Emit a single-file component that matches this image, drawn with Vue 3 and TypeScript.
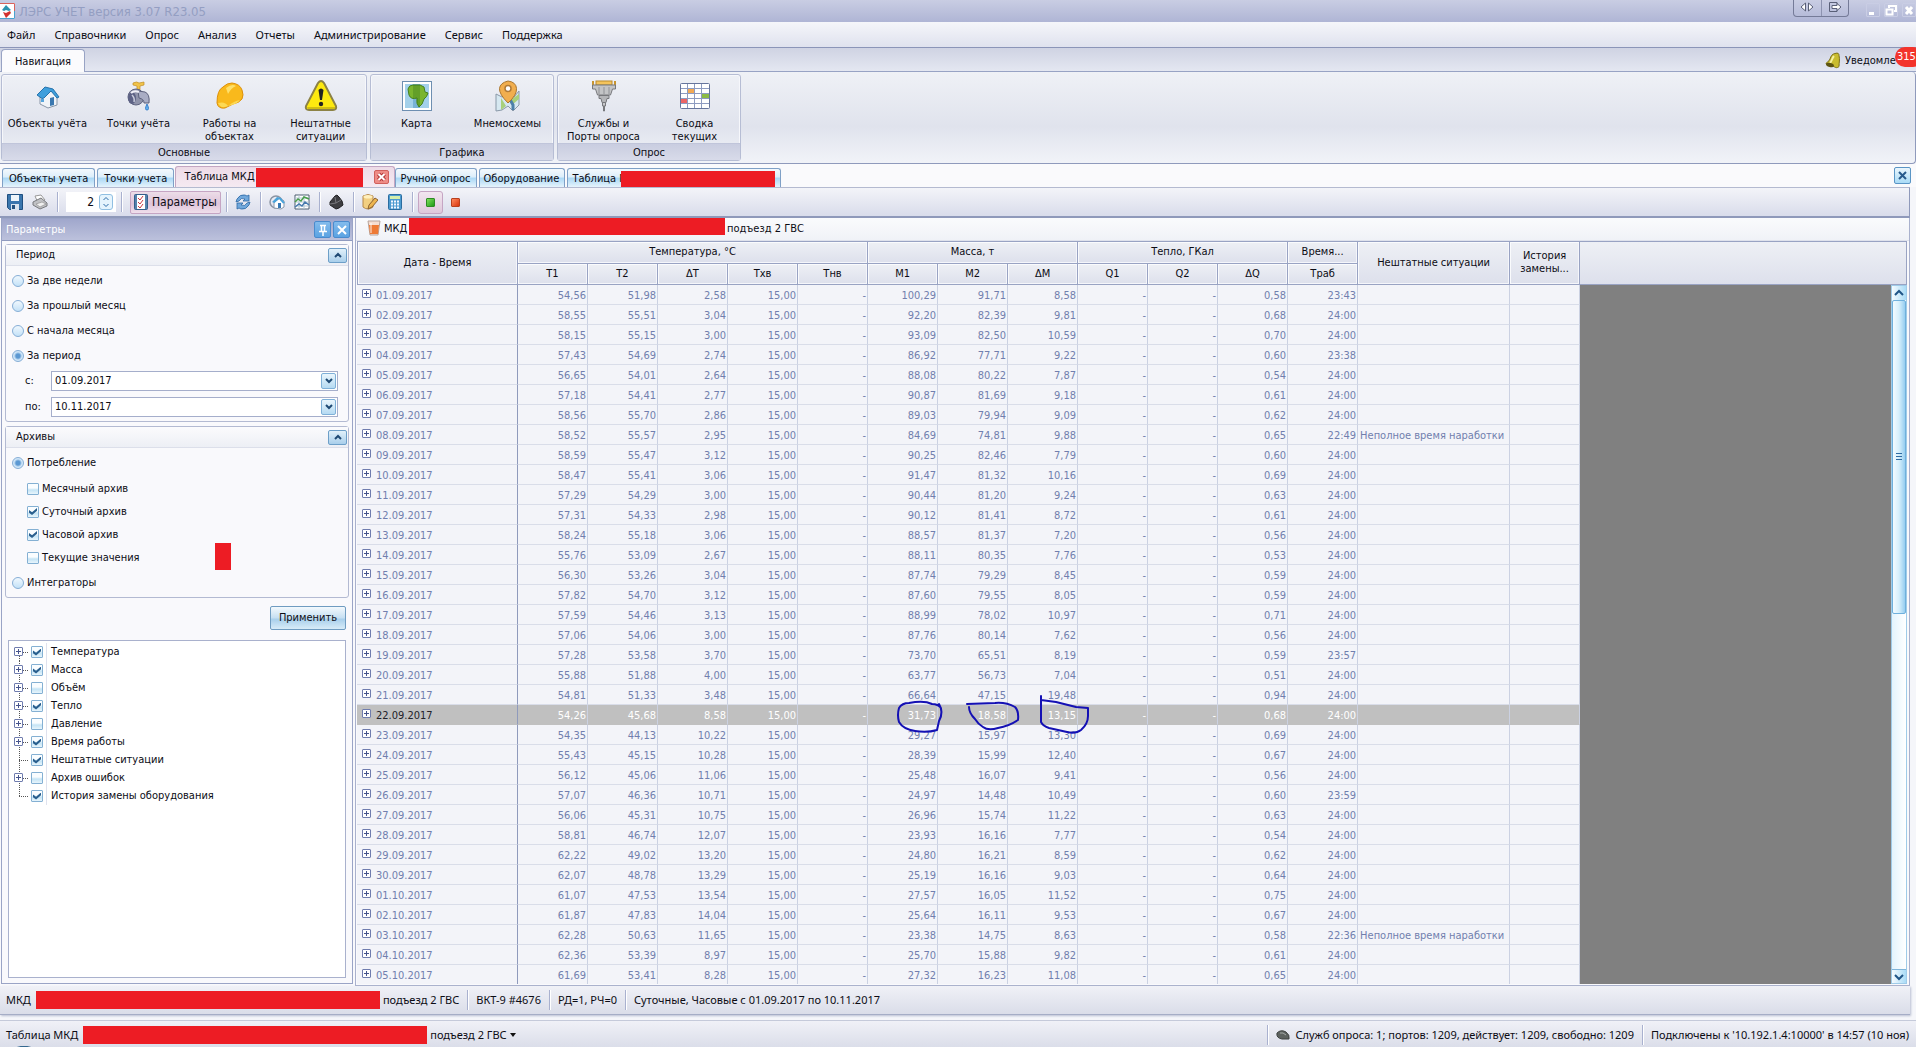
<script setup lang="ts">
import { ref } from 'vue'

interface ArchiveRow {
  date: string
  cells: string[]
  note: string
}

const menu = ['Файл', 'Справочники', 'Опрос', 'Анализ', 'Отчеты', 'Администрирование', 'Сервис', 'Поддержка']

const groups = [
  {
    title: 'Основные',
    items: [
      { icon: 'house', lines: ['Объекты учёта'] },
      { icon: 'tap', lines: ['Точки учёта'] },
      { icon: 'helmet', lines: ['Работы на', 'объектах'] },
      { icon: 'warning', lines: ['Нештатные', 'ситуации'] },
    ],
  },
  {
    title: 'Графика',
    items: [
      { icon: 'map', lines: ['Карта'] },
      { icon: 'pin', lines: ['Мнемосхемы'] },
    ],
  },
  {
    title: 'Опрос',
    items: [
      { icon: 'plug', lines: ['Службы и', 'Порты опроса'] },
      { icon: 'grid', lines: ['Сводка', 'текущих'] },
    ],
  },
]

const periods = ['За две недели', 'За прошлый месяц', 'С начала месяца', 'За период']
const period = ref('За период')
const dateFrom = ref('01.09.2017')
const dateTo = ref('10.11.2017')
const count = ref('2')
const source = ref('Потребление')

const archives = ref([
  { name: 'Месячный архив', on: false },
  { name: 'Суточный архив', on: true },
  { name: 'Часовой архив', on: true },
  { name: 'Текущие значения', on: false },
])

const tree = ref([
  { name: 'Температура', on: true, leaf: false },
  { name: 'Масса', on: true, leaf: false },
  { name: 'Объём', on: false, leaf: false },
  { name: 'Тепло', on: true, leaf: false },
  { name: 'Давление', on: false, leaf: false },
  { name: 'Время работы', on: true, leaf: false },
  { name: 'Нештатные ситуации', on: true, leaf: true },
  { name: 'Архив ошибок', on: false, leaf: false },
  { name: 'История замены оборудования', on: true, leaf: true },
])

// T1 T2 ΔT M1 M2 ΔM ΔQ Траб
const source35 = `54,56 51,98 2,58 100,29 91,71 8,58 0,58 23:43
58,55 55,51 3,04 92,20 82,39 9,81 0,68 24:00
58,15 55,15 3,00 93,09 82,50 10,59 0,70 24:00
57,43 54,69 2,74 86,92 77,71 9,22 0,60 23:38
56,65 54,01 2,64 88,08 80,22 7,87 0,54 24:00
57,18 54,41 2,77 90,87 81,69 9,18 0,61 24:00
58,56 55,70 2,86 89,03 79,94 9,09 0,62 24:00
58,52 55,57 2,95 84,69 74,81 9,88 0,65 22:49
58,59 55,47 3,12 90,25 82,46 7,79 0,60 24:00
58,47 55,41 3,06 91,47 81,32 10,16 0,69 24:00
57,29 54,29 3,00 90,44 81,20 9,24 0,63 24:00
57,31 54,33 2,98 90,12 81,41 8,72 0,61 24:00
58,24 55,18 3,06 88,57 81,37 7,20 0,56 24:00
55,76 53,09 2,67 88,11 80,35 7,76 0,53 24:00
56,30 53,26 3,04 87,74 79,29 8,45 0,59 24:00
57,82 54,70 3,12 87,60 79,55 8,05 0,59 24:00
57,59 54,46 3,13 88,99 78,02 10,97 0,71 24:00
57,06 54,06 3,00 87,76 80,14 7,62 0,56 24:00
57,28 53,58 3,70 73,70 65,51 8,19 0,59 23:57
55,88 51,88 4,00 63,77 56,73 7,04 0,51 24:00
54,81 51,33 3,48 66,64 47,15 19,48 0,94 24:00
54,26 45,68 8,58 31,73 18,58 13,15 0,68 24:00
54,35 44,13 10,22 29,27 15,97 13,30 0,69 24:00
55,43 45,15 10,28 28,39 15,99 12,40 0,67 24:00
56,12 45,06 11,06 25,48 16,07 9,41 0,56 24:00
57,07 46,36 10,71 24,97 14,48 10,49 0,60 23:59
56,06 45,31 10,75 26,96 15,74 11,22 0,63 24:00
58,81 46,74 12,07 23,93 16,16 7,77 0,54 24:00
62,22 49,02 13,20 24,80 16,21 8,59 0,62 24:00
62,07 48,78 13,29 25,19 16,16 9,03 0,64 24:00
61,07 47,53 13,54 27,57 16,05 11,52 0,75 24:00
61,87 47,83 14,04 25,64 16,11 9,53 0,67 24:00
62,28 50,63 11,65 23,38 14,75 8,63 0,58 22:36
62,36 53,39 8,97 25,70 15,88 9,82 0,61 24:00
61,69 53,41 8,28 27,32 16,23 11,08 0,65 24:00`

const rows: ArchiveRow[] = source35.split('\n').map((line, i) => {
  const v = line.split(' ')
  const day = i < 30 ? i + 1 : i - 29
  const month = i < 30 ? '09' : '10'
  return {
    date: `${String(day).padStart(2, '0')}.${month}.2017`,
    cells: [v[0], v[1], v[2], '15,00', '-', v[3], v[4], v[5], '-', '-', v[6], v[7]],
    note: i === 7 || i === 32 ? 'Неполное время наработки' : '',
  }
})

const selected = ref('22.09.2017')
const subHeads = ['Т1', 'Т2', 'ΔТ', 'Тхв', 'Тнв', 'М1', 'М2', 'ΔМ', 'Q1', 'Q2', 'ΔQ', 'Траб']
</script>

<template>
  <div class="app">
    <header class="title">
      <svg class="logo" width="16" height="16" viewBox="0 0 16 16">
        <rect x="0" y="0" width="15" height="16" fill="#fff" />
        <path d="M0 .5h14.5V8" fill="none" stroke="#d8635c" />
        <path d="M14.5 8v7.5H0" fill="none" stroke="#4aa3d0" />
        <path d="M2 7l4-5 5 5-2 1-3-1-2 1z" fill="#2d93b0" />
        <path d="M3 9l3 1 4-2 1 2-5 5z" fill="#d2322f" />
      </svg>
      <h1>ЛЭРС УЧЕТ версия 3.07 R23.05</h1>
      <div class="quick">
        <button type="button" aria-label="Переключить">
          <svg width="14" height="10" viewBox="0 0 14 10" fill="#fff" stroke="#5a6078"><path d="M5.500 1v8L1 5zM8.500 1v8L13 5z" /></svg>
        </button>
        <button type="button" aria-label="Выход">
          <svg width="14" height="12" viewBox="0 0 14 12" fill="none" stroke="#5a6078"><path d="M9 3.500V1.500H1.500v9H9V8.500" /><path d="M4 4.500h5V2.500L13 6 9 9.500v-2H4z" fill="#fff" /></svg>
        </button>
      </div>
      <div class="winbtns">
        <button type="button" aria-label="Свернуть"><svg width="12" height="12"><rect x="2" y="8" width="5" height="3" fill="#fff" /></svg></button>
        <button type="button" aria-label="Восстановить"><svg width="12" height="12" fill="none" stroke="#fff" stroke-width="2"><path d="M4 4V2h7v5H9M1.500 5.500h6v5h-6z" /></svg></button>
        <button type="button" aria-label="Закрыть"><svg width="12" height="12" stroke="#fff" stroke-width="3"><path d="M3 3l6 7M9 3l-6 7" /></svg></button>
      </div>
    </header>

    <nav class="menu">
      <button v-for="m in menu" :key="m" type="button">{{ m }}</button>
    </nav>

    <div class="strip">
      <button class="navtab" type="button">Навигация</button>
      <div class="notify">
        <svg width="16" height="18" viewBox="0 0 16 18">
          <path d="M10 1.500c3-1 4 0 4 2 1 4 0 7 0 11-2 2-4 1-5 0L1 12c0-2 3-2 4-5s2-5 5-5.500z" fill="#c9bc2e" stroke="#7c7018" />
          <path d="M9 4c-2 2-2 5-4 7" stroke="#f6f1a0" stroke-width="2" fill="none" />
          <ellipse cx="5" cy="13" rx="4" ry="2" fill="#5d5412" transform="rotate(15 5 13)" />
        </svg>
        <span>Уведомле</span>
        <b class="badge">315</b>
      </div>
    </div>

    <section class="ribbon">
      <div v-for="g in groups" :key="g.title" class="rgroup">
        <div class="ritems">
          <button v-for="it in g.items" :key="it.icon" type="button" class="ritem">
            <svg v-if="it.icon === 'house'" width="32" height="32" viewBox="0 0 32 32">
              <path d="M8 16v8l8 4 9-3v-9l-5-6z" fill="#f1f4f8" stroke="#8a97a8" />
              <path d="M5 15l8-8 8 2 6 8-2 1-6-7-7 7-2 .5z" fill="#3f9fdc" stroke="#2572ac" />
              <path d="M9 19h3v3H9z" fill="#56a5dd" /><path d="M18 18l4-1v8l-4 1z" fill="#3b78b0" />
            </svg>
            <svg v-else-if="it.icon === 'tap'" width="32" height="32" viewBox="0 0 32 32">
              <path d="M10 3q4-2 6 0l5-1v3l-4 1v4h-3V6l-4-1z" fill="#f0c34a" stroke="#c28e24" stroke-width=".7" />
              <circle cx="13" cy="17" r="8" fill="#8f93aa" stroke="#5e6380" />
              <path d="M15 11l7 1q5 2 4 11h-5q0-4-5-5z" fill="#a9adc4" stroke="#5c617c" />
              <ellipse cx="9" cy="18" rx="4" ry="6" fill="#5d6285" /><path d="M8 13q3-3 8-1" stroke="#f0f0f8" stroke-width="2" fill="none" />
              <path d="M9 15q3 3 2 7" stroke="#c9ccdc" stroke-width="1.500" fill="none" />
              <path d="M24 24q-3 6 0 6t0-6" fill="#63b1ee" stroke="#3a7fcb" />
            </svg>
            <svg v-else-if="it.icon === 'helmet'" width="32" height="32" viewBox="0 0 32 32">
              <path d="M3 23Q3 10 9 7q4-4 9-4 8 1 10 7 2 5 0 9-3 4-9 5l-8 4q-7 1-8-5z" fill="#f9b91c" stroke="#dd9009" />
              <path d="M4 23q7-2 10 3 6-5 12-6-3 4-8 5l-7 2q-5 1-7-4z" fill="#fcd955" />
              <path d="M12 8q6-5 10-2-5 2-8 8" fill="#fee06b" />
            </svg>
            <svg v-else-if="it.icon === 'warning'" width="34" height="32" viewBox="0 0 34 32">
              <path d="M14 3q3-4 6 0l12 23q1 4-3 4H5q-4 0-3-4z" fill="#fde910" stroke="#8c8245" stroke-width="2" />
              <path d="M3 27h28v2H4z" fill="#b5a312" opacity=".6" />
              <path d="M14.500 10q2.500-3 5 0l-1.500 10h-2z" fill="#222" /><circle cx="17" cy="24" r="2.200" fill="#222" />
            </svg>
            <svg v-else-if="it.icon === 'map'" width="32" height="32" viewBox="0 0 32 32">
              <rect x="1.500" y="1.500" width="29" height="29" fill="#fff" stroke="#6e8fb1" />
              <rect x="4" y="4" width="24" height="24" fill="#a3d0ea" /><path d="M12 4h7v24h-7z" fill="#5b9fc9" opacity=".6" />
              <path d="M7 9q1-4 5-4l7 0 4 2 1 5 3 1q-1 4-4 6l-2 5-3 3q-3-3-2-9-6 2-8-3z" fill="#7ab52e" stroke="#45811f" />
              <path d="M12 5h7v22q-4-3-3-9h-4z" fill="#2f6d1c" opacity=".3" />
            </svg>
            <svg v-else-if="it.icon === 'pin'" width="32" height="32" viewBox="0 0 32 32">
              <path d="M4 14l6 3 6-3 6 3 5-6v14l-6 6-5-5-6 4-6 1z" fill="#d6e8f1" stroke="#8998a8" />
              <path d="M9 18l5 8-5 4zM20 19l7-5v5l-7 6z" fill="#a8d07c" /><path d="M16 16l5 9v5" stroke="#4c80a9" stroke-width="3" fill="none" />
              <path d="M16 23Q7 14 7.500 8.500T16 1q8 1 8.500 7.500T16 23z" fill="#f1ae4e" stroke="#aa762e" /><circle cx="16" cy="8.500" r="3" fill="#fff" stroke="#b07b38" stroke-width="1.500" />
            </svg>
            <svg v-else-if="it.icon === 'plug'" width="32" height="32" viewBox="0 0 32 32">
              <path d="M5 1v5M27 1v5" stroke="#c9952f" stroke-width="2" />
              <rect x="8" y="1" width="16" height="4" fill="#f4c45c" stroke="#b98a2c" />
              <path d="M4.500 5h23v4h-3l-2 6h-13l-2-6h-3z" fill="#c3c4c6" stroke="#77787c" />
              <path d="M11 7v7M16 7v7M21 7v7" stroke="#909296" /><path d="M11 15.500h10v3h-2l-1 4h-4l-1-4h-2z" fill="#b4b5b8" stroke="#77787c" />
              <path d="M14.500 22.500h3V26h-3zM15.500 26v5h1v-5" fill="#c7c8cb" stroke="#77787c" />
            </svg>
            <svg v-else width="32" height="32" viewBox="0 0 32 32">
              <rect x="1.500" y="3.500" width="29" height="25" rx="1" fill="#fff" stroke="#66759c" />
              <path d="M9 9h7v5H9z" fill="#f3a954" /><path d="M23 14h7v5h-7z" fill="#8cbb45" /><path d="M2 19h7v5H2z" fill="#ec6565" />
              <path d="M8.500 4v24M15.500 4v24M22.500 4v24M2 8.500h28M2 13.500h28M2 18.500h28M2 23.500h28" stroke="#8d9bc0" fill="none" />
            </svg>
            <span v-for="l in it.lines" :key="l">{{ l }}</span>
          </button>
        </div>
        <div class="rtitle">{{ g.title }}</div>
      </div>
    </section>

    <div class="doctabs">
      <button type="button" class="dtab">Объекты учета</button>
      <button type="button" class="dtab">Точки учета</button>
      <div class="dtab active">
        <span>Таблица МКД</span><i class="mask m-active"></i>
        <button type="button" class="tabclose" aria-label="Закрыть вкладку"><svg width="13" height="12" viewBox="0 0 13 12"><path d="M3.500 3l6 6M9.500 3l-6 6" stroke="#b13535" stroke-width="4" /><path d="M3.500 3l6 6M9.500 3l-6 6" stroke="#fff" stroke-width="2" /></svg></button>
      </div>
      <button type="button" class="dtab tight">Ручной опрос</button>
      <button type="button" class="dtab tight">Оборудование</button>
      <button type="button" class="dtab tight"><span>Таблица М</span><i class="mask m-last"></i></button>
      <button type="button" class="closeall" aria-label="Закрыть"><svg width="12" height="12" stroke="#285a8c" stroke-width="2"><path d="M2 2l7 7M9 2L2 9" /></svg></button>
    </div>

    <div class="toolbar">
      <button type="button" class="tool" aria-label="Сохранить"><svg width="16" height="16" viewBox="0 0 16 16"><path d="M.500.500h15v15h-13l-2-2z" fill="#3a76ad" stroke="#1f4f80" /><path d="M4 1h8v6H4z" fill="#eef4fa" /><path d="M4 10h8v6H4z" fill="#d9e4ee" /><path d="M5 11h3v4H5z" fill="#24527f" /></svg></button>
      <button type="button" class="tool" aria-label="Печать"><svg width="16" height="16" viewBox="0 0 16 16"><path d="M3 2l6-1 4 5-7 3z" fill="#fff" stroke="#999" /><path d="M1 8l8-4 6 5v3l-7 3-7-4z" fill="#c0c1c4" stroke="#77797d" /><path d="M4 10l6-2 4 2-6 3z" fill="#efefef" stroke="#888" stroke-width=".6" /></svg></button>
      <i class="sep"></i>
      <div class="spin">
        <input v-model="count" type="text" aria-label="Количество" />
        <button type="button" aria-label="Изменить"><svg width="10" height="14" fill="none" stroke="#2b6ba8"><path d="M2.500 5L5 2.500 7.500 5M2.500 9L5 11.500 7.500 9" /></svg></button>
      </div>
      <i class="sep"></i>
      <button type="button" class="params">
        <svg width="14" height="16" viewBox="0 0 14 16"><rect x=".5" y=".5" width="13" height="15" rx="1" fill="#5582ac" stroke="#345f8b" /><path d="M3 1h8v14H3z" fill="#fff" /><path d="M4 4l2 2 3-4M4 8l2 2 3-4M4 12l2 2 3-4" stroke="#cb3a42" fill="none" /></svg>
        Параметры
      </button>
      <i class="sep"></i>
      <button type="button" class="tool" aria-label="Обновить"><svg width="16" height="16" viewBox="0 0 16 16" fill="#70a8dc" stroke="#2b67a4" stroke-width=".8"><path d="M2 5q3-5 8-4l2 1 2-1v6H8l2-2Q6 3 4 7L1 8z" /><path d="M14 11q-3 5-8 4l-2-1-2 1V9h6l-2 2q4 2 6-2l3-1z" /></svg></button>
      <i class="sep"></i>
      <button type="button" class="tool" aria-label="Объект"><svg width="16" height="16" viewBox="0 0 16 16"><circle cx="7" cy="8" r="6" fill="none" stroke="#8a94a3" stroke-width="1.500" /><path d="M5 8v6l7 1 3-2V7l-4-3z" fill="#fff" stroke="#8796a8" /><path d="M3 8l5-5 4 1 4 5-2 .5L10 5 5.500 9z" fill="#4aa3da" /><path d="M9 9h3v5H9z" fill="#3679b5" /></svg></button>
      <button type="button" class="tool" aria-label="График"><svg width="16" height="16" viewBox="0 0 16 16"><path d="M1 1h14v14H1z" fill="#fff" stroke="#4d5f70" /><path d="M1 4h14M1 8h14M1 12h14M5 1v14M10 1v14" stroke="#b3c6d2" /><path d="M1 8l3-3 3 2 3-4 5 2" stroke="#4a9e4c" fill="none" stroke-width="1.500" /><path d="M1 13l4-3 3 2 3-4 4 3" stroke="#477aae" fill="none" stroke-width="1.500" /></svg></button>
      <i class="sep"></i>
      <button type="button" class="tool" aria-label="Метка"><svg width="16" height="16" viewBox="0 0 16 16"><path d="M2 8l5-6 2-1 2 2 3 4 1 4-4 3-3 1-6-4z" fill="#3d3d41" stroke="#202022" /><path d="M7 3l1 6-6 1M8 9l5-3" stroke="#77777c" fill="none" /></svg></button>
      <i class="sep"></i>
      <button type="button" class="tool" aria-label="Правка"><svg width="16" height="16" viewBox="0 0 16 16"><path d="M1 2q5-3 10 0v11q-5 4-10 0z" fill="#f2cf81" stroke="#b5884b" /><ellipse cx="6" cy="2.800" rx="4.500" ry="1.800" fill="#fff0bd" /><path d="M6 15l1-4 6-7 3 2-6 7z" fill="#eeb64f" stroke="#8c6330" /></svg></button>
      <button type="button" class="tool" aria-label="Калькулятор"><svg width="16" height="16" viewBox="0 0 16 16"><rect x="1.500" y=".5" width="13" height="15" rx="1" fill="#4c9bd0" stroke="#2b6c9f" /><path d="M3 2h10v3H3z" fill="#d4efad" /><path d="M4 7.500h8M4 10.500h8M4 13.500h8" stroke="#f3f8ff" stroke-width="1.800" stroke-dasharray="2 1" /></svg></button>
      <i class="sep"></i>
      <button type="button" class="state on" aria-label="Включено"><i class="lamp green"></i></button>
      <button type="button" class="state" aria-label="Выключено"><i class="lamp red"></i></button>
    </div>

    <main class="work">
      <aside class="pane">
        <div class="phead">
          <span>Параметры</span>
          <button type="button" aria-label="Закрепить"><svg width="12" height="12" fill="none" stroke="#fff"><path d="M3 1.500h6M4.500 2v5M7.500 2v5M2 7.500h8M6 8v4" stroke-width="1.500" /></svg></button>
          <button type="button" aria-label="Закрыть панель"><svg width="12" height="12" stroke="#fff" stroke-width="2"><path d="M2 2l8 8M10 2l-8 8" /></svg></button>
        </div>
        <div class="pbody">
          <section class="box">
            <div class="bhead"><span>Период</span><button type="button" aria-label="Свернуть период"><svg width="8" height="6" fill="none" stroke="#1f4a74" stroke-width="2"><path d="M1 5l3-3 3 3" /></svg></button></div>
            <label v-for="p in periods" :key="p" class="opt"><input v-model="period" type="radio" name="period" :value="p" />{{ p }}</label>
            <div class="dates">
              <label for="from">с:</label>
              <div class="date"><input id="from" v-model="dateFrom" type="text" /><button type="button" aria-label="Выбрать начало"><svg width="8" height="6" fill="none" stroke="#1f4a74" stroke-width="2"><path d="M1 1l3 3 3-3" /></svg></button></div>
              <label for="to">по:</label>
              <div class="date"><input id="to" v-model="dateTo" type="text" /><button type="button" aria-label="Выбрать конец"><svg width="8" height="6" fill="none" stroke="#1f4a74" stroke-width="2"><path d="M1 1l3 3 3-3" /></svg></button></div>
            </div>
          </section>
          <section class="box second">
            <div class="bhead"><span>Архивы</span><button type="button" aria-label="Свернуть архивы"><svg width="8" height="6" fill="none" stroke="#1f4a74" stroke-width="2"><path d="M1 5l3-3 3 3" /></svg></button></div>
            <label class="opt"><input v-model="source" type="radio" name="source" value="Потребление" />Потребление</label>
            <div class="checks">
              <label v-for="a in archives" :key="a.name"><input v-model="a.on" type="checkbox" />{{ a.name }}</label>
              <i class="mask spot"></i>
            </div>
            <label class="opt"><input v-model="source" type="radio" name="source" value="Интеграторы" />Интеграторы</label>
          </section>
          <button type="button" class="apply">Применить</button>
          <ul class="tree">
            <li v-for="t in tree" :key="t.name" :class="{ leaf: t.leaf }">
              <i class="branch"><i v-if="!t.leaf" class="plus"></i></i>
              <label><input v-model="t.on" type="checkbox" /><span>{{ t.name }}</span></label>
            </li>
          </ul>
        </div>
      </aside>

      <section class="view">
        <div class="info">
          <svg width="14" height="16" viewBox="0 0 14 16"><path d="M1 1h12l-2 14H3z" fill="#f6ded2" stroke="#b7a49c" /><path d="M2 5h10l-1 9H3z" fill="#ee7a35" /><path d="M4 3v10" stroke="#fff" stroke-width="1.500" opacity=".6" /></svg>
          <span>МКД</span><i class="mask m-info"></i><span>подъезд 2 ГВС</span>
        </div>
        <div class="data">
          <div class="tablebox">
            <table>
              <colgroup>
                <col class="c-date" /><col v-for="s in subHeads" :key="s" class="c-num" /><col class="c-note" /><col class="c-num" />
              </colgroup>
              <thead>
                <tr>
                  <th rowspan="2" class="first">Дата - Время</th>
                  <th colspan="5">Температура, °C</th>
                  <th colspan="3">Масса, т</th>
                  <th colspan="3">Тепло, ГКал</th>
                  <th>Время...</th>
                  <th rowspan="2">Нештатные ситуации</th>
                  <th rowspan="2">История замены...</th>
                </tr>
                <tr><th v-for="s in subHeads" :key="s">{{ s }}</th></tr>
              </thead>
              <tbody>
                <tr v-for="r in rows" :key="r.date" :class="{ sel: r.date === selected }" @click="selected = r.date">
                  <td class="first"><i class="plus"></i>{{ r.date }}</td>
                  <td v-for="(c, i) in r.cells" :key="i">{{ c }}</td>
                  <td class="note">{{ r.note }}</td>
                  <td></td>
                </tr>
              </tbody>
            </table>
            <svg class="ink" width="205" height="50" viewBox="890 690 205 50" fill="none" stroke="#1410b4" stroke-width="2" stroke-linejoin="round" stroke-linecap="round">
              <path d="M939 704q5 8 0 17l-2 9q-10 3-22 1-12-2-16-9-2-7 0-14 3-5 10-5 15-3 23 1 6 0 9 4" />
              <path d="M967 704l28-1q11-1 20 4 4 4 3 13-9 6-20 8-10 3-15-1-5-3-8-8-6-6-6-12" />
              <path d="M1041 696v26q2 4 8 6l18 4q9 2 14-2 7-6 7-14v-8l-12-1-20-5-15-2" />
            </svg>
          </div>
          <div class="rest">
            <div class="hfill"></div>
            <div class="gray">
              <div class="scroll">
                <button type="button" aria-label="Вверх"><svg width="10" height="8" fill="none" stroke="#1f5587" stroke-width="2"><path d="M1 6l4-4 4 4" /></svg></button>
                <div class="thumb"><i></i></div>
                <button type="button" class="down" aria-label="Вниз"><svg width="10" height="8" fill="none" stroke="#1f5587" stroke-width="2"><path d="M1 2l4 4 4-4" /></svg></button>
              </div>
            </div>
          </div>
        </div>
      </section>
    </main>

    <footer class="status">
      <span>МКД</span><i class="mask m-foot"></i><span>подъезд 2 ГВС</span><i class="sep"></i><span>ВКТ-9 #4676</span><i class="sep"></i><span>РД=1, РЧ=0</span><i class="sep"></i><span>Суточные, Часовые с 01.09.2017 по 10.11.2017</span>
    </footer>
    <footer class="status bottom">
      <span>Таблица МКД</span><i class="mask m-foot"></i><span>подъезд 2 ГВС</span><i class="caret"></i>
      <div class="right">
        <i class="sep"></i>
        <svg width="14" height="10" viewBox="0 0 14 10"><path d="M1 3q4-4 9-1 4 3 3 7H6Q0 8 1 3z" fill="#5d625f" stroke="#3e4240" /><path d="M4 3q3-1 6 2" stroke="#a5aaa7" fill="none" /></svg>
        <span>Служб опроса: 1; портов: 1209, действует: 1209, свободно: 1209</span>
        <i class="sep"></i>
        <span>Подключены к '10.192.1.4:10000' в 14:57 (10 ноя)</span>
      </div>
      <svg class="orb" width="20" height="2" viewBox="0 0 20 2"><path d="M1 2.500Q10-1.500 19 2.500" fill="none" stroke="#35688f" stroke-width="1.500" /></svg>
    </footer>
  </div>
</template>

<style>
body {
  margin: 0;
  background: #f5f6fa;
}
</style>

<style scoped>
* {
  box-sizing: border-box;
}
.app {
  min-height: 100vh;
  display: flex;
  flex-direction: column;
  overflow: hidden;
  font: 11px/14px 'DejaVu Sans Condensed', 'Noto Sans', sans-serif;
  color: #0c0c14;
}
button,
input {
  font: inherit;
  color: inherit;
  margin: 0;
  padding: 0;
  border: 0;
  background: none;
}
svg {
  display: block;
  flex: none;
}
.mask {
  background: #ed1c24;
  flex: none;
}
.sep {
  flex: none;
  width: 1px;
  height: 20px;
  background: #a9b1cf;
  box-shadow: 1px 0 #fff;
}

/* title and menu */
.title {
  display: flex;
  height: 22px;
  background: linear-gradient(#c9cde3, #afb5d5);
}
.logo {
  margin-top: 3px;
}
.title h1 {
  margin: 0 auto 0 3px;
  font: 13px/24px 'DejaVu Sans Condensed', sans-serif;
  color: #949ec2;
}
.quick {
  display: flex;
  width: 56px;
  height: 17px;
  border: 1px solid #757b98;
  border-top: 0;
  border-radius: 0 0 4px 4px;
  margin-right: 17px;
}
.quick button {
  flex: 1;
  display: grid;
  place-items: center;
  padding-bottom: 3px;
}
.quick button + button {
  border-left: 1px solid #8d93b0;
}
.winbtns {
  display: flex;
  gap: 4px;
  padding-top: 3px;
}
.winbtns button {
  width: 14px;
  height: 14px;
  border: 1px solid #c9cde4;
  border-radius: 1px;
}
.menu {
  display: flex;
  gap: 19px;
  height: 26px;
  padding: 0 7px;
  background: linear-gradient(#f5f6fa, #dfe2ee);
  border-bottom: 1px solid #8b95b8;
  font: 11px/16px 'Noto Sans', sans-serif;
}
.strip {
  display: flex;
  justify-content: space-between;
  height: 24px;
  background: linear-gradient(#cfd3e3, #e4e7f1);
  border-bottom: 1px solid #98a3c4;
}
.navtab {
  align-self: flex-end;
  width: 84px;
  height: 23px;
  margin: 0 0 -1px 1px;
  padding-top: 1px;
  background: #fbfbfd;
  border: 1px solid #98a3c4;
  border-bottom: 0;
  border-radius: 4px 4px 0 0;
}
.notify {
  position: relative;
  display: flex;
  align-items: center;
  gap: 4px;
  width: 91px;
  overflow: hidden;
  margin-top: -1px;
  padding-top: 4px;
}
.badge {
  position: absolute;
  left: 70px;
  top: 0;
  height: 20px;
  width: 28px;
  padding-left: 2px;
  border-radius: 10px;
  background: #f3332b;
  color: #fff;
  font-weight: 400;
  line-height: 20px;
}

/* ribbon */
.ribbon {
  display: flex;
  gap: 3px;
  height: 92px;
  padding: 2px 1px;
  background: linear-gradient(#eff1f6, #e0e3ed 60%, #f1f3f8);
  border: 1px solid #8f9abc;
  border-width: 0 1px 1px 0;
  border-radius: 0 4px 4px 0;
}
.rgroup {
  display: flex;
  flex-direction: column;
  border: 1px solid #b6bdd4;
  border-radius: 3px;
  box-shadow: inset 0 0 0 1px #f6f7fb;
}
.ritems {
  flex: 1;
  display: flex;
}
.ritem {
  width: 91px;
  padding-top: 5px;
  display: flex;
  flex-direction: column;
  align-items: center;
  line-height: 13px;
}
.ritem svg {
  margin-bottom: 5px;
}
.rtitle {
  height: 17px;
  text-align: center;
  line-height: 18px;
  background: linear-gradient(#c9cde0, #d8dbe9);
  border-top: 1px solid #c0c5da;
}

/* document tabs */
.doctabs {
  display: flex;
  align-items: flex-end;
  gap: 2px;
  height: 23px;
  padding: 0 5px 0 2px;
  background: #fafafc;
}
.dtab {
  display: flex;
  align-items: center;
  height: 19px;
  padding: 1px 6px 0;
  border: 1px solid #7fa0c6;
  border-bottom: 0;
  border-radius: 3px 3px 0 0;
  background: linear-gradient(#f4f9fd, #dceefa 45%, #a9d7f5 50%, #e6f4fc);
}
.dtab.active {
  height: 21px;
  width: 220px;
  padding: 0 5px 0 8px;
  margin: 0 -2px 0 -1px;
  border-color: #c3a6c2;
  background: linear-gradient(#eddbe7, #f5eaf2);
}
.dtab.tight {
  padding: 1px 5px 0 4px;
}
.m-active {
  width: 107px;
  height: 19px;
  margin-left: auto;
}
.tabclose {
  margin-left: 11px;
  border: 1px solid #d0605c;
  border-radius: 2px;
  background: #ee8c86;
}
.m-last {
  width: 154px;
  height: 16px;
  margin-left: -7px;
}
.closeall {
  display: grid;
  place-items: center;
  margin: 0 0 3px auto;
  width: 17px;
  height: 17px;
  border: 1px solid #5a95c5;
  border-radius: 2px;
  background: linear-gradient(#eaf6fd, #a9dbf6);
}

/* toolbar */
.toolbar {
  display: flex;
  align-items: center;
  height: 31px;
  margin-right: 6px;
  padding-left: 7px;
  background: linear-gradient(#f3f4f9, #d9dceb);
  border: 1px solid #8f99ba;
  border-width: 1px 1px 2px 0;
  border-top-color: #b4bad0;
}
.tool {
  width: 16px;
  margin-right: 9px;
}
.toolbar > .sep {
  margin-right: 8px;
}
.spin {
  display: flex;
  align-items: center;
  width: 50px;
  height: 20px;
  margin-right: 5px;
  background: #fff;
}
.spin input {
  width: 28px;
  text-align: right;
  font-size: 12px;
}
.spin button {
  margin-left: 5px;
  width: 14px;
  height: 16px;
  padding: 0 1px;
  border: 1px solid #90bfe2;
  border-radius: 3px;
  background: #e5f4fd;
}
.params {
  display: flex;
  align-items: center;
  gap: 4px;
  height: 23px;
  width: 91px;
  margin-right: 5px;
  padding-left: 3px;
  border: 1px solid #c5a5c3;
  border-radius: 2px;
  background: linear-gradient(#ecdde8, #dfc4da 55%, #efdfeb);
  font-size: 12px;
}
.state {
  display: grid;
  place-items: center;
  width: 25px;
  height: 23px;
  border-radius: 3px;
}
.toolbar > .sep:nth-last-child(3) {
  margin-right: 5px;
}
.state.on {
  border: 1px solid #c5a5c3;
  background: linear-gradient(#f2e6ef, #dfc8db);
}
.lamp {
  width: 9px;
  height: 9px;
  border-radius: 1px;
}
.green {
  background: linear-gradient(135deg, #7fe05a, #219a18);
  border: 1px solid #2f8a25;
}
.red {
  background: linear-gradient(135deg, #ff8a5f, #d8340e);
  border: 1px solid #b8401e;
}

/* left pane */
.work {
  flex: 1;
  display: flex;
  margin-right: 6px;
  background: #f9f9fc;
}
.pane {
  flex: none;
  display: flex;
  flex-direction: column;
  width: 352px;
  margin: 0 2px 2px 1px;
  border: 1px solid #9aa4c6;
}
.phead {
  display: flex;
  align-items: center;
  gap: 2px;
  height: 22px;
  padding: 0 2px 0 4px;
  color: #fff;
  background: linear-gradient(#a0a7cc, #bcc1dc);
  border-bottom: 1px solid #8f9abf;
}
.phead span {
  margin-right: auto;
}
.phead button {
  display: grid;
  place-items: center;
  width: 17px;
  height: 17px;
  border: 1px solid #4a8bcd;
  border-radius: 2px;
  background: linear-gradient(#83bbec, #5ba3e2);
}
.pbody {
  flex: 1;
  display: flex;
  flex-direction: column;
  padding: 3px;
}
.box {
  height: 178px;
  border: 1px solid #b3bad2;
  border-radius: 3px;
}
.box.second {
  height: 172px;
  margin-top: 4px;
}
.bhead {
  display: flex;
  align-items: center;
  justify-content: space-between;
  height: 21px;
  margin-bottom: 2px;
  padding: 0 1px 0 10px;
  background: linear-gradient(#fbfbfd, #edeff5);
  border-bottom: 1px solid #dcdfea;
}
.bhead button {
  display: grid;
  place-items: center;
  width: 19px;
  height: 15px;
  border: 1px solid #6d9fc8;
  border-radius: 2px;
  background: linear-gradient(#e1f0fa, #a9cfeb);
}
.opt {
  display: flex;
  align-items: center;
  gap: 3px;
  height: 25px;
  padding-left: 6px;
}
.opt input {
  appearance: none;
  width: 12px;
  height: 12px;
  border: 1px solid #86aed6;
  border-radius: 50%;
  background: linear-gradient(#f0f8fe, #c3e1f7);
}
.opt input:checked {
  background: radial-gradient(#5b98d2 0 2px, #d0e6f8 4px);
}
.dates {
  display: grid;
  grid-template-columns: 26px 1fr;
  row-gap: 6px;
  align-items: center;
  padding: 3px 10px 0 19px;
}
.date {
  display: flex;
  align-items: center;
  height: 20px;
  padding: 0 1px 0 3px;
  background: #fff;
  border: 1px solid #a5aecb;
}
.date input {
  flex: 1;
  min-width: 0;
}
.date button {
  display: grid;
  place-items: center;
  width: 15px;
  height: 16px;
  border: 1px solid #7fb0d8;
  border-radius: 2px;
  background: linear-gradient(#eaf6fd, #b5daf2);
}
.checks {
  position: relative;
  display: flex;
  flex-direction: column;
  padding: 2px 0 1px 21px;
}
.checks label,
.tree label {
  display: flex;
  align-items: center;
  gap: 3px;
  height: 23px;
}
.checks input,
.tree input {
  appearance: none;
  flex: none;
  display: grid;
  place-items: center;
  width: 12px;
  height: 12px;
  border: 1px solid #84b0d3;
  border-radius: 1px;
  background: linear-gradient(#fafdff 40%, #c5e4f5 60%, #e8f5fc);
}
.checks input:checked::after,
.tree input:checked::after {
  content: '';
  width: 8px;
  height: 7px;
  background: #2a5f8e;
  clip-path: polygon(0 30%, 38% 62%, 100% 0, 100% 38%, 38% 100%, 0 68%);
}
.spot {
  position: absolute;
  left: 209px;
  bottom: 0;
  width: 16px;
  height: 27px;
}
.apply {
  align-self: flex-end;
  width: 76px;
  height: 24px;
  margin: 8px 3px 10px;
  border: 1px solid #6f9cc1;
  border-radius: 2px;
  background: linear-gradient(#f3f9fd, #c5dff2 50%, #a8cfeb 55%, #d8ecf8);
}
.tree {
  flex: 1;
  list-style: none;
  margin: 0 3px 2px;
  padding: 2px 5px 0;
  background: #fff;
  border: 1px solid #a9b1cd;
}
.tree li {
  display: flex;
  align-items: center;
  height: 18px;
}
.branch {
  position: relative;
  width: 14px;
  height: 18px;
  background:
    repeating-linear-gradient(90deg, #555 0 1px, transparent 1px 2px) 5px 9px / 9px 1px no-repeat,
    repeating-linear-gradient(#555 0 1px, transparent 1px 2px) 5px 0 / 1px 18px no-repeat;
}
.tree li:last-child .branch {
  background-size: 9px 1px, 1px 9px;
}
.tree li:first-child .branch {
  background-position: 5px 9px;
}
.branch .plus {
  position: absolute;
  left: 0;
  top: 4px;
}
.tree label {
  height: 18px;
  margin-left: 3px;
}
.tree label span {
  line-height: 18px;
  padding-left: 4px;
  border-left: 1px solid #dfe2ee;
}
.plus {
  display: inline-block;
  width: 9px;
  height: 9px;
  border: 1px solid #6f7cae;
  border-radius: 1px;
  background:
    linear-gradient(#45538c, #45538c) center / 5px 1px no-repeat,
    linear-gradient(#45538c, #45538c) center / 1px 5px no-repeat,
    #fff;
}

/* data view */
.view {
  flex: 1;
  min-width: 0;
  display: flex;
  flex-direction: column;
  border: 1px solid #a9b1cd;
  border-top: 0;
}
.info {
  display: flex;
  align-items: flex-start;
  height: 23px;
  padding-left: 11px;
  border-bottom: 1px solid #dfe2ec;
  background: linear-gradient(#fafbfd, #f0f2f7);
  line-height: 21px;
}
.info svg {
  margin: 2px 3px 0 0;
}
.m-info {
  width: 316px;
  height: 17px;
  margin-right: 2px;
}
.info span:first-of-type {
  width: 25px;
}
.data {
  flex: 1;
  display: flex;
  padding: 0 2px 1px 1px;
}
.tablebox {
  position: relative;
  height: 743px;
  overflow: hidden;
}
table {
  table-layout: fixed;
  width: 1223px;
  border-collapse: separate;
  border-spacing: 0;
}
.c-date {
  width: 161px;
}
.c-num {
  width: 70px;
}
.c-note {
  width: 152px;
}
th {
  height: 22px;
  padding: 0 0 2px;
  font-weight: 400;
  line-height: 13px;
  border: 1px solid #99a3c3;
  border-width: 1px 1px 0 0;
  box-shadow: inset 1px 1px #fafbfd, inset -1px -1px #f5f6fb;
  background: linear-gradient(#eef0f5, #dde0ec);
}
th.first {
  border-left-width: 1px;
}
thead tr:last-child th,
th[rowspan] {
  border-bottom-width: 1px;
}
td {
  height: 20px;
  padding: 3px 1px 0 0;
  text-align: right;
  color: #717fae;
  background: #f3f4f9;
  border: 1px solid #d9dde9;
  border-width: 0 1px 1px 0;
  border-right-color: #cbd1e2;
  white-space: nowrap;
  line-height: 16px;
}
td.first {
  padding-left: 5px;
  text-align: left;
  border-right-color: #8f9abc;
}
td.first .plus {
  margin-right: 5px;
  vertical-align: 1px;
}
td.note {
  text-align: left;
  padding-left: 2px;
}
.sel td {
  background: #c0c0c0;
  border-bottom-color: #c0c0c0;
  color: #fff;
}
.sel td.first {
  color: #22222a;
}
.ink {
  position: absolute;
  left: 533px;
  top: 449px;
}
.rest {
  flex: 1;
  display: flex;
  flex-direction: column;
}
.hfill {
  height: 44px;
  border: 1px solid #99a3c3;
  border-left: 0;
  background: linear-gradient(#eef0f5, #dde0ec);
}
.gray {
  flex: 1;
  display: flex;
  justify-content: flex-end;
  background: #808080;
}
.scroll {
  display: flex;
  flex-direction: column;
  width: 16px;
  border: 1px solid #9fcbe8;
  background: linear-gradient(90deg, #e3f4fd, #fff);
}
.scroll button {
  display: grid;
  place-items: center;
  height: 14px;
  background: linear-gradient(90deg, #f5fbff, #a9dbf6);
}
.scroll .down {
  margin-top: auto;
  border-top: 1px solid #7fb5da;
}
.thumb {
  display: grid;
  place-items: center;
  height: 45%;
  border: 1px solid #6fb0dc;
  border-radius: 2px;
  background: linear-gradient(90deg, #f3fbff, #d5effc 50%, #96cdf0);
}
.thumb i {
  width: 6px;
  height: 7px;
  background: repeating-linear-gradient(#2f6ba3 0 1px, transparent 1px 3px);
}

/* status bars */
.status {
  display: flex;
  align-items: center;
  height: 29px;
  margin-right: 6px;
  padding-left: 6px;
  background: linear-gradient(#f0f1f7, #dadde9);
  border-bottom: 1px solid #a5adc6;
  box-shadow: 1px 1px 2px #b9bfd2;
  font: 11px/16px 'Noto Sans', sans-serif;
}
.status .m-foot {
  width: 344px;
  height: 18px;
  margin: 0 3px 0 5px;
}
.status .sep {
  margin: 0 8px;
}
.status.bottom {
  position: relative;
  height: 28px;
  margin: 5px 0 0;
  border: 0;
  border-top: 1px solid #c5cada;
  box-shadow: none;
}
.caret {
  margin-left: 3px;
  border: 3px solid transparent;
  border-top: 4px solid #111;
  border-bottom: 0;
}
.right {
  display: flex;
  align-items: center;
  margin: 0 7px 0 auto;
}
.right svg {
  margin-right: 5px;
}
.orb {
  position: absolute;
  left: 14px;
  bottom: 0;
}
</style>
